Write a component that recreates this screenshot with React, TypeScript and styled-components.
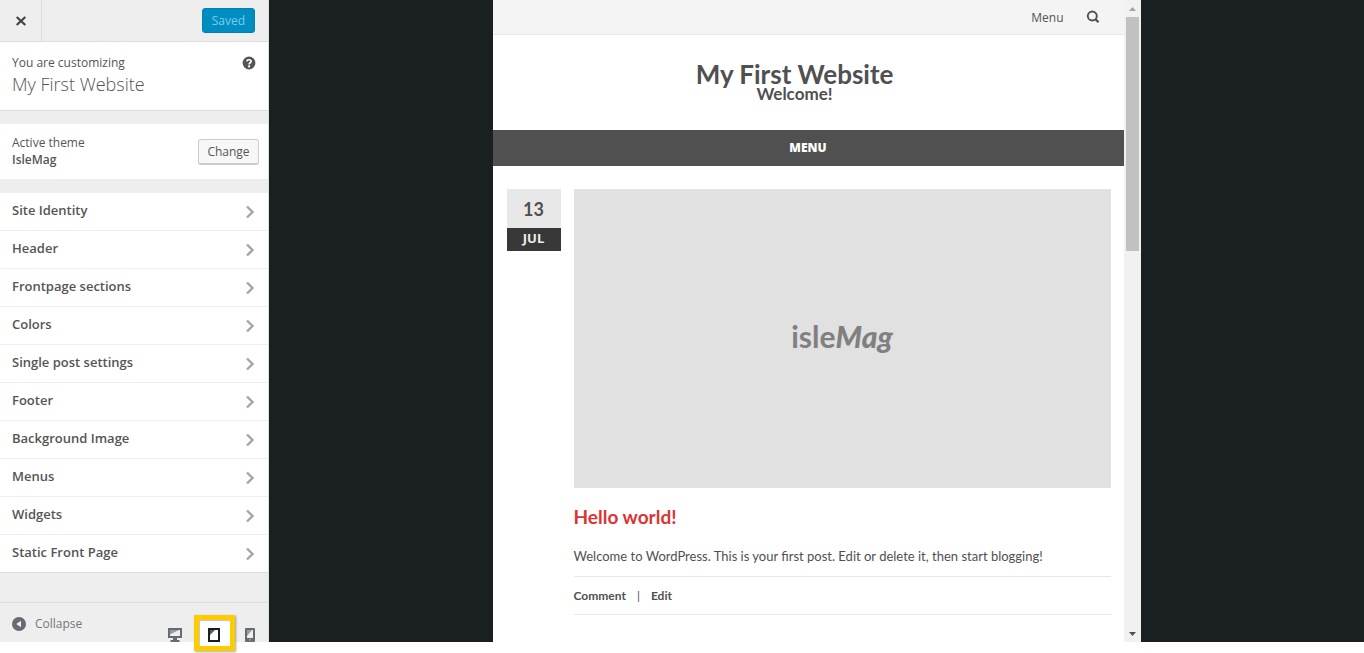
import React from "react";
import styled, { createGlobalStyle } from "styled-components";

const GlobalStyle = createGlobalStyle`
  *, *::before, *::after { box-sizing: border-box; }
  body {
    margin: 0;
    background: #fff;
    color: #555;
    font-family: "Open Sans", sans-serif;
    font-size: 13px;
    line-height: 18px;
  }
  button { font: inherit; color: inherit; cursor: pointer; }
  a { color: inherit; text-decoration: none; }
  h1, h2, p, ul { margin: 0; padding: 0; }
`;

const Page = styled.div`
  display: grid;
  grid-template-columns: 269px minmax(0, 1fr);
  min-height: 100vh;
  padding-bottom: 11px;
`;

const Sidebar = styled.aside`
  display: flex;
  flex-direction: column;
  background: #eee;
  border-right: 1px solid #ddd;
`;

const ActionBar = styled.header`
  display: flex;
  justify-content: space-between;
  align-items: center;
  height: 42px;
  padding-right: 13px;
  border-bottom: 1px solid #ddd;
`;

const CloseButton = styled.button`
  display: grid;
  place-items: center;
  width: 42px;
  height: 41px;
  padding: 0;
  border: 0;
  border-right: 1px solid #ddd;
  background: transparent;
`;

const SavedButton = styled.button`
  height: 25px;
  padding: 0 9px;
  border: 1px solid #0082b4;
  border-radius: 3px;
  background: #008ec2;
  color: #7fcbe8;
  font-size: 12px;
  line-height: 22px;
`;

const Panel = styled.section<{ $ruled?: boolean }>`
  display: flex;
  justify-content: space-between;
  background: #fff;
  padding: 12px;
  ${(p) => (p.$ruled ? "height: 69px; border-bottom: 1px solid #ddd;" : "height: 55px; margin: 13px 0 14px; padding: 10px 9px 0 12px;")}
`;

const Small = styled.p`
  font-size: 12px;
`;

const SiteName = styled.p`
  font-size: 18px;
  font-weight: 300;
  line-height: 24px;
`;

const ThemeName = styled.p`
  font-size: 12px;
  line-height: 16px;
  font-weight: 600;
`;

const HelpButton = styled.button`
  width: 14px;
  height: 14px;
  margin: 2px 0 0;
  padding: 0;
  border: 0;
  background: none;
  svg { display: block; }
`;

const ChangeButton = styled.button`
  width: 61px;
  height: 26px;
  margin-top: 5px;
  padding: 0;
  border: 1px solid #ccc;
  border-bottom-width: 2px;
  border-radius: 3px;
  background: #f7f7f7;
  font-size: 12px;
  line-height: 22px;
`;

const SectionList = styled.ul`
  list-style: none;
  background: #fff;
`;

const SectionItem = styled.li`
  border-bottom: 1px solid #eee;
  &:last-child { border-bottom-color: #ddd; }
`;

const SectionButton = styled.button`
  display: flex;
  justify-content: space-between;
  align-items: center;
  width: 100%;
  height: 37px;
  padding: 0 13px 4px 12px;
  border: 0;
  background: none;
  font-weight: 600;
  svg { margin-top: 5px; }
`;

const Footer = styled.footer`
  display: flex;
  justify-content: space-between;
  height: 40px;
  margin-top: auto;
  padding: 0 13px 0 12px;
  border-top: 1px solid #ddd;
`;

const CollapseButton = styled.button`
  display: flex;
  align-items: center;
  gap: 9px;
  padding: 2px 0 0;
  border: 0;
  background: none;
  color: #72777c;
  font-size: 12px;
`;

const Devices = styled.div`
  display: flex;
  align-items: flex-end;
  gap: 25px;
`;

const DeviceButton = styled.button<{ $active?: boolean }>`
  position: relative;
  padding: 0;
  border: 0;
  background: none;
  svg { position: relative; display: block; }
  ${(p) => p.$active && `
    &::before {
      content: "";
      position: absolute;
      top: -13px;
      left: -14px;
      width: 41px;
      height: 36px;
      border: 5px solid #fc0;
      background: #fff;
      box-shadow: 1px 1px 2px rgba(0, 0, 0, .35), inset 1px 1px 1px rgba(0, 0, 0, .25);
    }
  `}
`;

const Stage = styled.main`
  display: flex;
  justify-content: center;
  background: #1a1f22;
`;

const Preview = styled.div`
  display: grid;
  grid-template-columns: minmax(0, 1fr) 17px;
  width: 100%;
  max-width: 648px;
  background: #fff;
`;

const TopBar = styled.nav`
  display: flex;
  justify-content: flex-end;
  align-items: center;
  gap: 22px;
  height: 35px;
  padding-right: 24px;
  border-bottom: 1px solid #e8e8e8;
  background: #f4f4f4;
  font-size: 12px;
  line-height: 18px;
  a { padding-top: 2px; }
`;

const SearchButton = styled.button`
  padding: 0;
  border: 0;
  background: none;
  svg { display: block; }
`;

const Masthead = styled.header`
  height: 95px;
  padding: 26px 27px 0 0;
  text-align: center;
  color: #505050;
  font-family: Lato, sans-serif;
  font-weight: 700;
  h1 { font-size: 26px; line-height: 26px; }
  p { font-size: 17px; line-height: 14px; }
`;

const MenuButton = styled.button`
  display: block;
  width: 100%;
  height: 36px;
  padding: 0;
  border: 0;
  background: #505050;
  color: #fff;
  font-size: 12px;
  font-weight: 800;
`;

const Post = styled.article`
  display: grid;
  grid-template-columns: 54px minmax(0, 1fr);
  align-items: start;
  gap: 13px;
  padding: 23px 13px 0 14px;
  font-family: Lato, sans-serif;
  color: #505050;
`;

const PostDate = styled.time`
  display: block;
  padding-top: 2px;
  background: #e8e8e8;
  text-align: center;
  font-size: 18px;
  font-weight: 700;
  line-height: 37px;
`;

const Month = styled.span`
  display: block;
  padding-bottom: 2px;
  background: #383838;
  color: #eee;
  font-family: "Open Sans", sans-serif;
  font-size: 13px;
  line-height: 21px;
`;

const Thumbnail = styled.a`
  display: grid;
  place-items: center;
  height: 299px;
  padding-bottom: 6px;
  background: #e1e1e1;
  color: #808080;
  font-size: 30px;
  font-weight: 700;
  line-height: 36px;
  em { font-weight: 900; }
`;

const PostTitle = styled.h2`
  margin-top: 18px;
  color: #dd3333;
  font-size: 19px;
  line-height: 22px;
`;

const Excerpt = styled.p`
  padding: 18px 0 10px;
  border-bottom: 1px solid #e8e8e8;
  font-size: 13px;
  line-height: 20px;
`;

const PostMeta = styled.div`
  display: flex;
  gap: 11px;
  border-bottom: 1px solid #e8e8e8;
  font-size: 12px;
  line-height: 37px;
  a { font-weight: 700; }
`;

const Scrollbar = styled.div`
  display: flex;
  flex-direction: column;
  align-items: center;
  background: #f1f1f1;
  svg { display: block; }
`;

const Thumb = styled.div`
  width: 13px;
  height: 234px;
  margin-bottom: auto;
  background: #c1c1c1;
`;

const sections = [
  "Site Identity", "Header", "Frontpage sections", "Colors", "Single post settings",
  "Footer", "Background Image", "Menus", "Widgets", "Static Front Page",
];

const Chevron = () => (
  <svg width="10" height="14" viewBox="0 0 10 14" fill="none" stroke="#a0a5aa" strokeWidth="2.4" aria-hidden="true">
    <path d="M2 1.500 7.500 7 2 12.500" />
  </svg>
);

export default function App() {
  return (
    <>
      <GlobalStyle />
      <Page>
        <Sidebar>
          <ActionBar>
            <CloseButton aria-label="Close">
              <svg width="12" height="12" viewBox="0 0 12 12" fill="none" stroke="#444" strokeWidth="2.2">
                <path d="m1.7 2 8.6 8M10.3 2l-8.6 8" />
              </svg>
            </CloseButton>
            <SavedButton>Saved</SavedButton>
          </ActionBar>

          <Panel $ruled>
            <div>
              <Small>You are customizing</Small>
              <SiteName>My First Website</SiteName>
            </div>
            <HelpButton aria-label="Help">
              <svg width="14" height="14" viewBox="0 0 14 14">
                <circle cx="7" cy="7" r="6.4" fill="#555" />
                <path d="M4.9 5.4C5 3.2 9.1 3.2 9.1 5.4 9.1 6.8 7.1 6.8 7.1 8.5" fill="none" stroke="#fff" strokeWidth="1.7" />
                <circle cx="7.1" cy="10.4" r="1.1" fill="#fff" />
              </svg>
            </HelpButton>
          </Panel>

          <Panel>
            <div>
              <Small>Active theme</Small>
              <ThemeName>IsleMag</ThemeName>
            </div>
            <ChangeButton>Change</ChangeButton>
          </Panel>

          <SectionList>
            {sections.map((name) => (
              <SectionItem key={name}>
                <SectionButton>
                  {name}
                  <Chevron />
                </SectionButton>
              </SectionItem>
            ))}
          </SectionList>

          <Footer>
            <CollapseButton>
              <svg width="14" height="14" viewBox="0 0 14 14" aria-hidden="true">
                <circle cx="7" cy="7" r="7" fill="#656b70" />
                <path d="M9 3.7v6.6L4.2 7z" fill="#eee" />
              </svg>
              Collapse
            </CollapseButton>
            <Devices>
              <DeviceButton aria-label="Desktop preview">
                <svg width="16" height="14" viewBox="0 0 16 14">
                  <path d="M1 0h14v10H1z" fill="#656b70" />
                  <path d="M3 2h10v6H3z" fill="#eee" />
                  <path d="M3 2h9L3 6.500z" fill="#989c9f" />
                  <path d="M6 10h4v2h2.500v2h-9v-2H6z" fill="#656b70" />
                </svg>
              </DeviceButton>
              <DeviceButton $active aria-label="Tablet preview" aria-pressed="true">
                <svg width="12" height="14" viewBox="0 0 12 14">
                  <path d="M1 1h10v12H1z" fill="#fff" stroke="#191e23" strokeWidth="2" />
                  <path d="M2 2h5L2 7z" fill="#555b60" />
                </svg>
              </DeviceButton>
              <DeviceButton aria-label="Mobile preview">
                <svg width="10" height="14" viewBox="0 0 10 14">
                  <rect width="10" height="14" rx="1" fill="#656b70" />
                  <path d="M2 2h6v8H2z" fill="#eee" />
                  <path d="M2 2h5L2 8z" fill="#989c9f" />
                  <path d="M4 11.300h2v1.200H4z" fill="#aaa" />
                </svg>
              </DeviceButton>
            </Devices>
          </Footer>
        </Sidebar>

        <Stage>
          <Preview>
            <div>
              <TopBar>
                <a href="#menu">Menu</a>
                <SearchButton aria-label="Search">
                  <svg width="14" height="14" viewBox="0 0 14 14" fill="none" stroke="#505050">
                    <circle cx="6.300" cy="6" r="4.500" strokeWidth="1.900" />
                    <path d="m9.500 9.200 3 3" strokeWidth="2.300" />
                  </svg>
                </SearchButton>
              </TopBar>
              <Masthead>
                <h1>My First Website</h1>
                <p>Welcome!</p>
              </Masthead>
              <MenuButton>MENU</MenuButton>
              <Post>
                <PostDate dateTime="07-13">
                  13
                  <Month>JUL</Month>
                </PostDate>
                <div>
                  <Thumbnail href="#post">
                    <span>isle<em>Mag</em></span>
                  </Thumbnail>
                  <PostTitle><a href="#post">Hello world!</a></PostTitle>
                  <Excerpt>Welcome to WordPress. This is your first post. Edit or delete it, then start blogging!</Excerpt>
                  <PostMeta>
                    <a href="#comment">Comment</a>
                    <span>|</span>
                    <a href="#edit">Edit</a>
                  </PostMeta>
                </div>
              </Post>
            </div>
            <Scrollbar aria-hidden="true">
              <svg width="17" height="17" viewBox="0 0 17 17"><path d="M5 11h7L8.500 7z" fill="#a3a3a3" /></svg>
              <Thumb />
              <svg width="17" height="17" viewBox="0 0 17 17"><path d="M5 7h7l-3.500 4z" fill="#505050" /></svg>
            </Scrollbar>
          </Preview>
        </Stage>
      </Page>
    </>
  );
}
